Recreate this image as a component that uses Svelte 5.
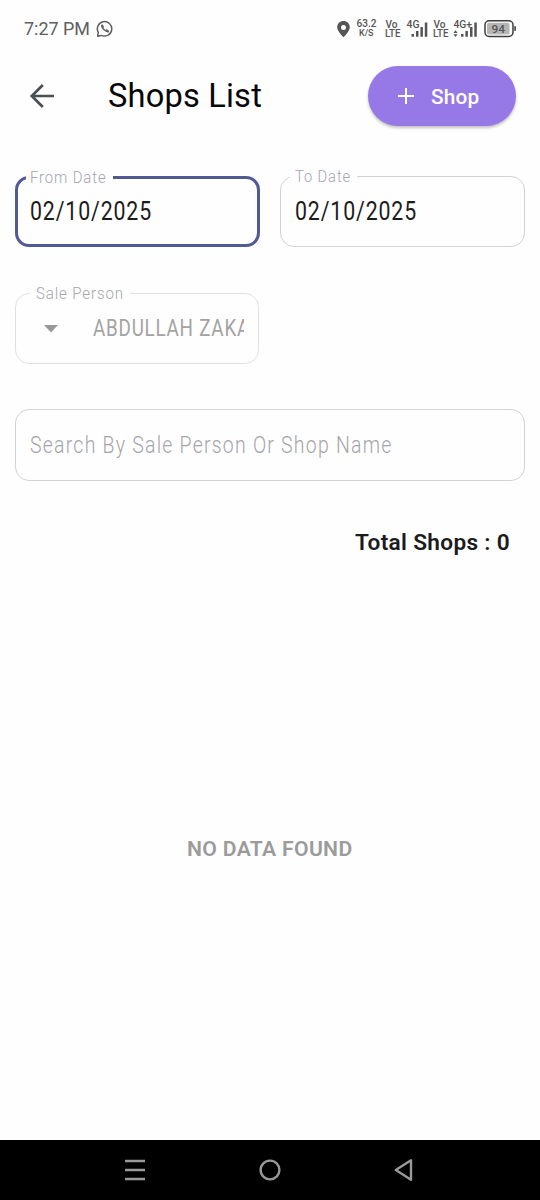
<script>
  const fromDate = '02/10/2025';
  const toDate = '02/10/2025';
  const person = 'ABDULLAH ZAKA';
</script>

{#snippet fit(text, width, size, weight, spacing = 0)}
  <svg class="fit" width={width} height={size} role="img" aria-label={text}>
    <text x="0" y={size * 0.86} font-size={size} font-weight={weight} letter-spacing={spacing} textLength={width} lengthAdjust="spacingAndGlyphs">{text}</text>
  </svg>
{/snippet}

<div class="screen">
  <div class="status">
    <div class="clock">{@render fit('7:27 PM', 66, 18, 400)}
      <svg width="18" height="18" viewBox="0 0 18 18" fill="none" stroke="#606060" stroke-width="1.5">
        <path d="M1.6 16.2 2.3 12.4A7.2 7.2 0 1 1 5.6 15.4Z" stroke-linejoin="round" />
        <path d="M6.2 5.6C5.3 7.8 9.6 12.1 12 11.4" stroke-width="1.5" stroke-linecap="round" />
        <path d="m6.2 5.6.6 1.4M12 11.4l-1.3-.9" stroke-width="2.2" stroke-linecap="round" />
      </svg>
    </div>
    <svg class="indicators" width="184" height="30" viewBox="334 14 184 30" fill="#555">
      <path fill-rule="evenodd" d="M343.5 21c-3.6 0-6.3 2.7-6.3 6.2 0 4.2 6.3 10 6.3 10s6.3-5.8 6.3-10c0-3.5-2.7-6.2-6.3-6.2Zm0 3.9a2.5 2.5 0 1 1 0 5 2.5 2.5 0 0 1 0-5Z" />
      <g font-size="10" font-weight="500">
        <text x="356.5" y="27" textLength="20" lengthAdjust="spacingAndGlyphs">63.2</text>
        <text x="359" y="36" font-size="8.5" textLength="14.5" lengthAdjust="spacingAndGlyphs">K/S</text>
        <text x="385.5" y="27.5" textLength="12" lengthAdjust="spacingAndGlyphs">Vo</text>
        <text x="385" y="36.7" textLength="15.5" lengthAdjust="spacingAndGlyphs">LTE</text>
        <text x="406.5" y="27.9" textLength="13" lengthAdjust="spacingAndGlyphs">4G</text>
        <text x="433.5" y="27.5" textLength="12" lengthAdjust="spacingAndGlyphs">Vo</text>
        <text x="433" y="36.7" textLength="15.5" lengthAdjust="spacingAndGlyphs">LTE</text>
        <text x="453.5" y="27.9" textLength="18.5" lengthAdjust="spacingAndGlyphs">4G+</text>
      </g>
      <path d="M411.5 34h2.5v2.7h-2.5zM416 31h2.5v5.7H416zM420.4 27h2.5v9.7h-2.5zM424.8 22.5h2.5v14.2h-2.5zM461 34h2.5v2.7H461zM465.4 31h2.5v5.7h-2.5zM470 27h2.5v9.7H470zM474.3 22.5h2.5v14.2h-2.5z" />
      <path d="m453.4 33 2.1-2.7 2.1 2.7zM453.4 34.2l2.1 2.7 2.1-2.7z" />
      <rect x="485" y="20.8" width="28" height="15.6" rx="4.2" fill="none" stroke="#3d3d3d" stroke-width="1.5" />
      <rect x="487" y="22.8" width="22.5" height="11.6" rx="2" fill="#b5b5b5" />
      <rect x="514.2" y="26" width="1.8" height="5" rx=".8" />
      <text x="491.5" y="32.7" font-size="11.5" font-weight="500" textLength="13.5" lengthAdjust="spacingAndGlyphs">94</text>
    </svg>
  </div>

  <header>
    <svg class="back" width="26" height="26" viewBox="0 0 26 26" fill="none" stroke="#4a4e55" stroke-width="2.7">
      <path d="M25 13H3M13.8 2 2.8 13l11 11" />
    </svg>
    <h1>{@render fit('Shops List', 154, 33.6, 400, 0.2)}</h1>
    <button>
      <svg width="16" height="16" viewBox="0 0 16 16" stroke="#fff" stroke-width="2"><path d="M8 0v16M0 8h16" /></svg>
      {@render fit('Shop', 48.5, 20.8, 500, 0.2)}
    </button>
  </header>

  <main>
    <div class="dates">
      <fieldset class="active">
        <legend>{@render fit('From Date', 76.5, 16.8, 300, 1)}</legend>
        <div class="value">{@render fit(fromDate, 122, 25, 400, 1)}</div>
      </fieldset>
      <fieldset>
        <legend>{@render fit('To Date', 56, 16.8, 300, 1)}</legend>
        <div class="value">{@render fit(toDate, 122, 25, 400, 1)}</div>
      </fieldset>
    </div>
    <fieldset class="person">
      <legend>{@render fit('Sale Person', 88, 16.8, 300, 1)}</legend>
      <div class="choice">
        <svg class="caret" width="14" height="8" viewBox="0 0 14 8"><path d="M0 0h14L7 7.4Z" fill="#999" /></svg>
        <div class="name">{@render fit(person, 157, 24.6, 400, 1)}</div>
      </div>
    </fieldset>
    <div class="search">{@render fit('Search By Sale Person Or Shop Name', 362.5, 23.6, 300, 1.5)}</div>
    <div class="total">{@render fit('Total Shops : 0', 155, 22, 600, 0.3)}</div>
    <div class="empty">{@render fit('NO DATA FOUND', 165.5, 20.4, 600, 0.3)}</div>
  </main>

  <nav>
    <svg width="22" height="24" viewBox="0 0 22 24" stroke="#999" stroke-width="2.6"><path d="M1 3h20M1 12h20M1 21h20" /></svg>
    <svg width="22" height="24" viewBox="0 0 22 24" fill="none" stroke="#999" stroke-width="2.4"><circle cx="11" cy="12" r="9.4" /></svg>
    <svg width="22" height="24" viewBox="0 0 22 24" fill="none" stroke="#999" stroke-width="2.4" stroke-linejoin="round"><path d="M17 2.3v19.4L1.8 12Z" /></svg>
  </nav>
</div>

<style>
  :global(body) { margin: 0; background: #fff; }
  .screen { width: 540px; height: 1200px; display: flex; flex-direction: column; background: #fefefe; font-family: Roboto, sans-serif; }
  svg { display: block; flex: none; }
  .fit { overflow: visible; fill: currentColor; }
  .status { height: 58px; display: flex; justify-content: space-between; padding: 0 22px 0 24px; box-sizing: border-box; color: #606060; }
  .clock { display: flex; gap: 6px; padding-top: 20px; }
  .indicators { margin-top: 14px; }
  header { height: 76px; display: flex; align-items: center; padding: 0 24px 0 29px; }
  .back { width: 26px; }
  h1 { margin: -3px 0 0 53px; color: #080808; font-weight: 400; }
  button { margin-left: auto; width: 148px; height: 60px; border: 0; border-radius: 30px; padding: 0 0 0 30px; display: flex; align-items: center; gap: 17px; background: #9678e6; color: #fff; font-family: inherit; box-shadow: 0 2px 3px #0000003d; }
  main { flex: 1; padding: 38px 15px 0; }
  .dates { display: grid; grid-template-columns: 245px 245px; gap: 20px; }
  fieldset { box-sizing: border-box; min-width: 0; margin: 0; height: 75px; padding: 0; border: 1.5px solid #d2d2d5; border-radius: 14px; color: #1b1b1b; }
  fieldset.active { border: 3px solid #515a91; }
  legend { height: 9px; margin-left: 9px; padding: 0 6px 0 5px; color: #a5a5af; display: flex; align-items: center; }
  .active legend { height: 11px; margin-left: 8px; padding: 0 6px 0 4px; }
  .value { padding: 17px 0 0 14px; }
  .active .value { padding: 15px 0 0 12px; }
  .person { width: 244px; margin-top: 42px; border-color: #e0e0e2; color: #a3a3a3; }
  .person legend { margin-left: 14px; padding: 0 6px; }
  .choice { display: flex; align-items: center; gap: 35px; padding: 17px 14px 0 28px; }
  .caret { margin-top: 3px; }
  .name { flex: 1; min-width: 0; overflow: hidden; }
  .search { height: 72px; box-sizing: border-box; margin-top: 45px; padding: 23px 14px 0; border: 1.5px solid #d2d2d5; border-radius: 14px; color: #a5a5a9; }
  .total { display: flex; justify-content: flex-end; padding: 50px 15px 0 0; color: #1b1b20; }
  .empty { display: flex; justify-content: center; margin-top: 285px; color: #9b9b9b; }
  nav { height: 60px; background: #000; display: flex; align-items: center; justify-content: center; gap: 113px; }
</style>
